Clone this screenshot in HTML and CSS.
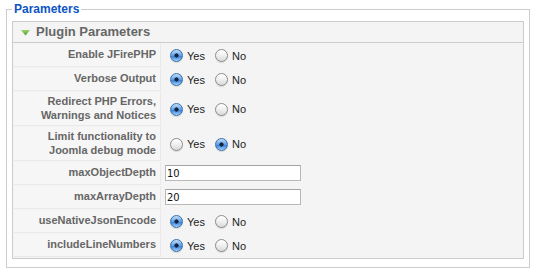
FILE: index.html
```html
<!DOCTYPE html>
<html lang="en">
<head>
    <meta charset="UTF-8">
    <title>Plugin Parameters</title>
    <link rel="stylesheet" href="styles.css">
</head>
<body>
    <fieldset class="params">
        <legend>Parameters</legend>
        <div class="panel">
            <h3 class="panel-title">
                <svg class="toggle" width="9" height="6" viewBox="0 0 9 6">
                    <defs>
                        <linearGradient id="tg" x1="0" y1="0" x2="0" y2="1">
                            <stop offset="0" stop-color="#9ed46c"/>
                            <stop offset="1" stop-color="#4f9a2a"/>
                        </linearGradient>
                    </defs>
                    <polygon points="0,0 9,0 4.5,5.5" fill="url(#tg)"/>
                </svg>
                <span>Plugin Parameters</span>
            </h3>
            <table class="paramlist">
                <tr>
                    <td class="key">Enable JFirePHP</td>
                    <td class="value">
                        <div class="choice">
                            <input type="radio" class="radio" name="enable" checked><label>Yes</label>
                            <input type="radio" class="radio" name="enable"><label>No</label>
                        </div>
                    </td>
                </tr>
                <tr>
                    <td class="key">Verbose Output</td>
                    <td class="value">
                        <div class="choice">
                            <input type="radio" class="radio" name="verbose" checked><label>Yes</label>
                            <input type="radio" class="radio" name="verbose"><label>No</label>
                        </div>
                    </td>
                </tr>
                <tr>
                    <td class="key">Redirect PHP Errors,<br>Warnings and Notices</td>
                    <td class="value">
                        <div class="choice">
                            <input type="radio" class="radio" name="redirect" checked><label>Yes</label>
                            <input type="radio" class="radio" name="redirect"><label>No</label>
                        </div>
                    </td>
                </tr>
                <tr>
                    <td class="key">Limit functionality to<br>Joomla debug mode</td>
                    <td class="value">
                        <div class="choice">
                            <input type="radio" class="radio" name="limit"><label>Yes</label>
                            <input type="radio" class="radio" name="limit" checked><label>No</label>
                        </div>
                    </td>
                </tr>
                <tr>
                    <td class="key">maxObjectDepth</td>
                    <td class="value">
                        <div class="field"><input type="text" class="text-input" value="10"></div>
                    </td>
                </tr>
                <tr>
                    <td class="key">maxArrayDepth</td>
                    <td class="value">
                        <div class="field"><input type="text" class="text-input" value="20"></div>
                    </td>
                </tr>
                <tr>
                    <td class="key">useNativeJsonEncode</td>
                    <td class="value">
                        <div class="choice">
                            <input type="radio" class="radio" name="json" checked><label>Yes</label>
                            <input type="radio" class="radio" name="json"><label>No</label>
                        </div>
                    </td>
                </tr>
                <tr>
                    <td class="key">includeLineNumbers</td>
                    <td class="value">
                        <div class="choice">
                            <input type="radio" class="radio" name="lines" checked><label>Yes</label>
                            <input type="radio" class="radio" name="lines"><label>No</label>
                        </div>
                    </td>
                </tr>
            </table>
        </div>
    </fieldset>
</body>
</html>
```

FILE: styles.css
```css
body {
    margin: 0;
    background-color: white;
    font-family: "Liberation Sans", Arial, sans-serif;
    font-size: 11px;
    color: #333;
}
.params {
    margin: 2px 10px 0 6px;
    padding: 5px;
    border: 1px solid #ccc;
    min-width: 0;
}
.params legend {
    padding: 0 2px;
    color: #0b55c4;
    font-size: 12px;
    font-weight: bold;
    line-height: 14px;
}
.panel {
    border: 1px solid #ccc;
    background-color: #f4f4f4;
    margin-bottom: 3px;
}
.panel-title {
    display: flex;
    align-items: center;
    margin: 0;
    padding: 2px 2px 2px 8px;
    border-bottom: 1px solid #ccc;
    color: #666;
    font-size: 13px;
    font-weight: bold;
    line-height: 16px;
}
.toggle {
    margin: 2px 6px 0 0;
}
.paramlist {
    width: 100%;
    border-collapse: separate;
    border-spacing: 1px;
}
.paramlist td {
    padding: 3px;
    vertical-align: middle;
}
.paramlist td.key {
    width: 139px;
    padding-right: 4px;
    text-align: right;
    color: #666;
    font-weight: bold;
    line-height: 13.5px;
    background-color: #f6f6f6;
    border-bottom: 1px solid #e9e9e9;
    border-right: 1px solid #e9e9e9;
}
.choice {
    display: flex;
    align-items: center;
    height: 17px;
    color: #222;
}
.choice label {
    margin-right: 5px;
}
.radio {
    appearance: none;
    -webkit-appearance: none;
    box-sizing: border-box;
    width: 13px;
    height: 13px;
    margin: 0 4px 0 5px;
    border: 1px solid #8c8c8c;
    border-radius: 50%;
    background: linear-gradient(#ffffff, #f2f2f2 45%, #d9d9d9);
    box-shadow: 0 1px 1px rgba(0, 0, 0, 0.12);
}
.radio:checked {
    border-color: #3a6fab;
    background:
        radial-gradient(circle, #15233a 0 1.8px, transparent 2.4px),
        linear-gradient(#c3defa, #5d9fe6 50%, #3d86dc 60%, #9fd0fa);
}
.field {
    height: 17px;
}
.text-input {
    box-sizing: border-box;
    display: block;
    width: 136px;
    height: 16px;
    margin: 0;
    padding: 0 1px;
    border: 1px solid #b8b8b8;
    border-top-color: #a3a3a3;
    background-color: white;
    font-family: "DejaVu Sans Condensed", "DejaVu Sans", sans-serif;
    font-size: 11px;
    color: #111;
    outline: none;
}
```
